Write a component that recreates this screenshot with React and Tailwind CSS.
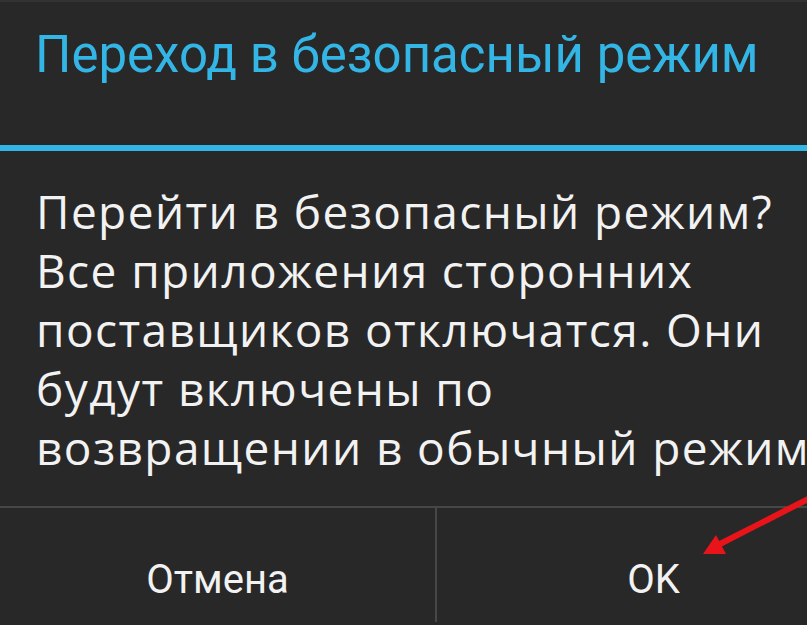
export default function App() {
  return (
    <div className="relative h-[625px] w-[807px] overflow-hidden bg-[#282828]">
      <div className="flex w-[870px] flex-col border-t-2 border-[#323232]">
        <div className="h-[143px] pl-[35px] pt-[27px]">
          <h1 className="whitespace-nowrap text-[51px] leading-none text-[#33b5e5]" style={{ fontFamily: 'Roboto, sans-serif' }}>
            Переход в безопасный режим
          </h1>
        </div>
        <div className="h-[6px] bg-[#33b5e5]" />

        <div className="h-[355px] pl-[36px] pt-[31px]">
          <p
            className="whitespace-nowrap text-[46px] leading-[59px] tracking-[1.4px] text-[#f2f2f2]"
            style={{ fontFamily: '"Open Sans", sans-serif' }}
          >
            Перейти в безопасный режим?
            <br />
            Все приложения сторонних
            <br />
            поставщиков отключатся. Они
            <br />
            будут включены по
            <br />
            возвращении в обычный режим.
          </p>
        </div>

        <div className="flex h-[116px] border-t-2 border-[#474747]">
          <button
            className="flex w-1/2 items-center justify-center pt-[30px] text-[40px] leading-none text-[#f2f2f2]"
            style={{ fontFamily: 'Roboto, sans-serif' }}
            type="button"
          >
            Отмена
          </button>
          <button
            className="flex w-1/2 items-center justify-center border-l-2 border-[#474747] pt-[30px] text-[40px] leading-none text-[#f2f2f2]"
            style={{ fontFamily: 'Roboto, sans-serif' }}
            type="button"
          >
            OK
          </button>
        </div>
      </div>

      <svg className="absolute left-0 top-0" width="807" height="625" viewBox="0 0 807 625">
        <line x1="812" y1="497" x2="716" y2="546" stroke="#e8141a" strokeWidth="6" strokeLinecap="round" />
        <polygon points="703,554 716,535 726,554" fill="#e8141a" />
      </svg>
    </div>
  );
}
